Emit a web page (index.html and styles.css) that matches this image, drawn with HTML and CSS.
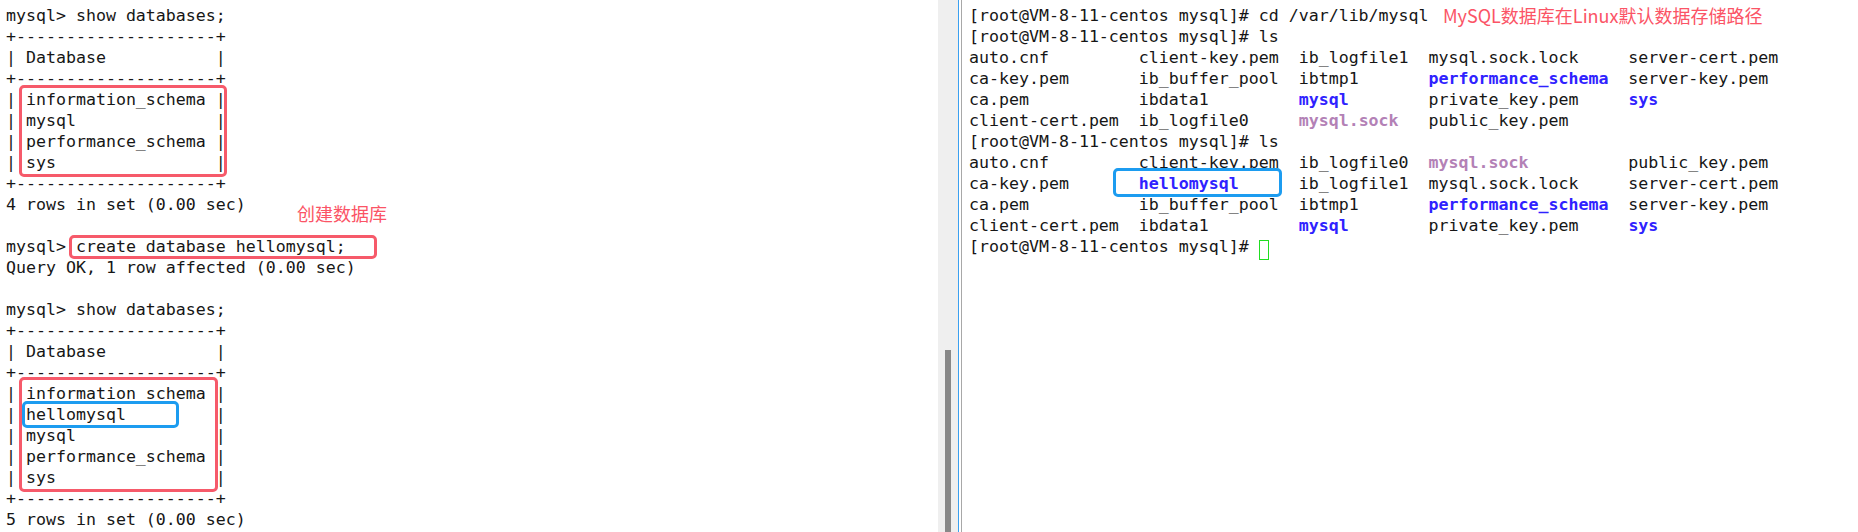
FILE: index.html
```html
<!DOCTYPE html>
<html lang="zh-CN">
<head>
<meta charset="utf-8">
<title>MySQL terminal</title>
<link rel="stylesheet" href="styles.css">
</head>
<body>
<div class="screen">
  <section class="pane pane-left">
<pre class="term">mysql&gt; show databases;
+--------------------+
| Database           |
+--------------------+
| information_schema |
| mysql              |
| performance_schema |
| sys                |
+--------------------+
4 rows in set (0.00 sec)

mysql&gt; create database hellomysql;
Query OK, 1 row affected (0.00 sec)

mysql&gt; show databases;
+--------------------+
| Database           |
+--------------------+
| information_schema |
| hellomysql         |
| mysql              |
| performance_schema |
| sys                |
+--------------------+
5 rows in set (0.00 sec)</pre>
    <div class="mark mark-red box-a"></div>
    <div class="mark mark-red box-b"></div>
    <div class="mark mark-red box-c"></div>
    <div class="mark mark-blue box-d"></div>
    <div class="note note-left">创建数据库</div>
  </section>

  <div class="gutter"><div class="thumb"></div></div>
  <div class="rule-blue"></div>
  <div class="rule-gap"></div>
  <div class="rule-gray"></div>

  <section class="pane pane-right">
<pre class="term">[root@VM-8-11-centos mysql]# cd /var/lib/mysql
[root@VM-8-11-centos mysql]# ls
auto.cnf         client-key.pem  ib_logfile1  mysql.sock.lock     server-cert.pem
ca-key.pem       ib_buffer_pool  ibtmp1       <b class="dir">performance_schema</b>  server-key.pem
ca.pem           ibdata1         <b class="dir">mysql</b>        private_key.pem     <b class="dir">sys</b>
client-cert.pem  ib_logfile0     <b class="sock">mysql.sock</b>   public_key.pem
[root@VM-8-11-centos mysql]# ls
auto.cnf         client-key.pem  ib_logfile0  <b class="sock">mysql.sock</b>          public_key.pem
ca-key.pem       <b class="dir">hellomysql</b>      ib_logfile1  mysql.sock.lock     server-cert.pem
ca.pem           ib_buffer_pool  ibtmp1       <b class="dir">performance_schema</b>  server-key.pem
client-cert.pem  ibdata1         <b class="dir">mysql</b>        private_key.pem     <b class="dir">sys</b>
[root@VM-8-11-centos mysql]# <span class="cursor"> </span></pre>
    <div class="mark mark-blue box-e"></div>
    <div class="note note-right">MySQL数据库在Linux默认数据存储路径</div>
  </section>
</div>
</body>
</html>
```
FILE: styles.css
```css
html, body {
  margin: 0;
  padding: 0;
  background: #ffffff;
}

.screen {
  position: relative;
  display: flex;
  width: 1858px;
  height: 532px;
  overflow: hidden;
  background: #ffffff;
}

.pane {
  position: relative;
  box-sizing: border-box;
  height: 532px;
}

.pane-left {
  width: 938px;
  padding: 5px 0 0 6px;
}

.pane-right {
  flex: 1;
  padding: 5px 0 0 7px;
}

.term {
  margin: 0;
  font-family: "DejaVu Sans Mono", "Liberation Mono", monospace;
  font-size: 16.6px;
  line-height: 21px;
  color: #161616;
  white-space: pre;
}

.term b {
  font-weight: bold;
}

.dir {
  color: #2f22ff;
}

.sock {
  color: #b381b6;
}

.cursor {
  display: inline-block;
  box-sizing: border-box;
  width: 10px;
  height: 20px;
  border: 1px solid #22dd22;
  vertical-align: -5px;
}

.gutter {
  width: 20px;
  height: 532px;
  background: #efefef;
  display: flex;
  flex-direction: column;
  padding-top: 350px;
  box-sizing: border-box;
}

.thumb {
  flex: 1;
  width: 6px;
  margin-left: 7px;
  background: #888888;
}

.rule-blue {
  width: 1px;
  background: #3aa0f0;
}

.rule-gap {
  width: 2px;
}

.rule-gray {
  width: 1px;
  background: #a8a8a8;
}

.mark {
  position: absolute;
  box-sizing: border-box;
  border-radius: 5px;
}

.mark-red {
  border: 3px solid #f65a6a;
}

.mark-blue {
  border: 3px solid #1c9cf0;
}

.box-a { left: 19px; top: 85px; width: 208px; height: 92px; }
.box-b { left: 69px; top: 235px; width: 308px; height: 24px; }
.box-c { left: 19px; top: 377px; width: 199px; height: 115px; }
.box-d { left: 22px; top: 401px; width: 157px; height: 27px; }
.box-e { left: 151px; top: 168px; width: 169px; height: 29px; }

.note {
  position: absolute;
  font-family: "Noto Sans CJK SC", "Noto Sans", sans-serif;
  font-size: 18px;
  line-height: 24px;
  color: #fb5466;
  white-space: nowrap;
}

.note-left { left: 297px; top: 201px; }
.note-right { left: 481px; top: 3px; }
```
